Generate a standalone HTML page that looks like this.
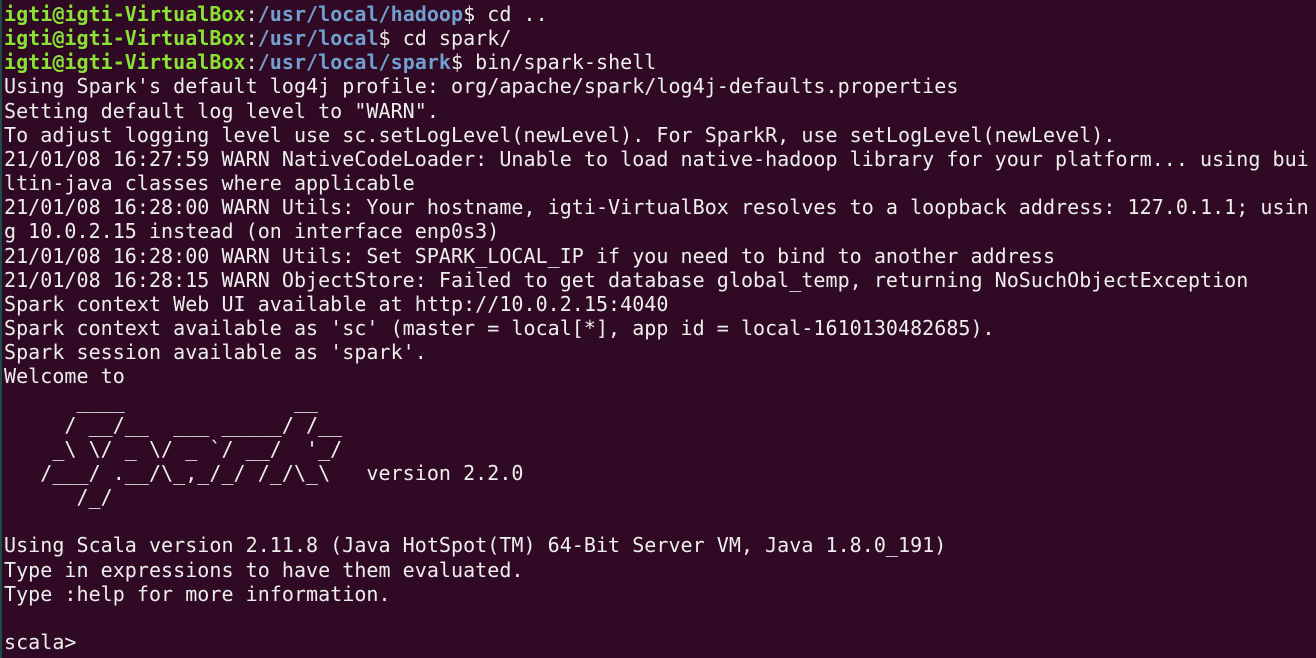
<!DOCTYPE html>
<html><head><meta charset="utf-8"><style>
html,body{margin:0;padding:0;background:#300a24;width:1316px;height:658px;overflow:hidden}
pre{margin:0;position:absolute;left:4px;top:2px;font-family:"DejaVu Sans Mono","Liberation Mono",monospace;font-size:20px;letter-spacing:0.04px;line-height:24.15px;color:#eeeeec;white-space:pre}
.g{color:#8ae234;font-weight:bold}
.b{color:#729fcf;font-weight:bold}
.edge{position:absolute;left:0;top:0;width:2px;height:658px;background:#1d4a4a}
</style></head><body><div class="edge"></div><pre><span class="g">igti@igti-VirtualBox</span>:<span class="b">/usr/local/hadoop</span>$ cd ..
<span class="g">igti@igti-VirtualBox</span>:<span class="b">/usr/local</span>$ cd spark/
<span class="g">igti@igti-VirtualBox</span>:<span class="b">/usr/local/spark</span>$ bin/spark-shell
Using Spark's default log4j profile: org/apache/spark/log4j-defaults.properties
Setting default log level to "WARN".
To adjust logging level use sc.setLogLevel(newLevel). For SparkR, use setLogLevel(newLevel).
21/01/08 16:27:59 WARN NativeCodeLoader: Unable to load native-hadoop library for your platform... using bui
ltin-java classes where applicable
21/01/08 16:28:00 WARN Utils: Your hostname, igti-VirtualBox resolves to a loopback address: 127.0.1.1; usin
g 10.0.2.15 instead (on interface enp0s3)
21/01/08 16:28:00 WARN Utils: Set SPARK_LOCAL_IP if you need to bind to another address
21/01/08 16:28:15 WARN ObjectStore: Failed to get database global_temp, returning NoSuchObjectException
Spark context Web UI available at http://10.0.2.15:4040
Spark context available as 'sc' (master = local[*], app id = local-1610130482685).
Spark session available as 'spark'.
Welcome to
      ____              __
     / __/__  ___ _____/ /__
    _\ \/ _ \/ _ `/ __/  '_/
   /___/ .__/\_,_/_/ /_/\_\   version 2.2.0
      /_/

Using Scala version 2.11.8 (Java HotSpot(TM) 64-Bit Server VM, Java 1.8.0_191)
Type in expressions to have them evaluated.
Type :help for more information.

scala&gt; </pre></body></html>
